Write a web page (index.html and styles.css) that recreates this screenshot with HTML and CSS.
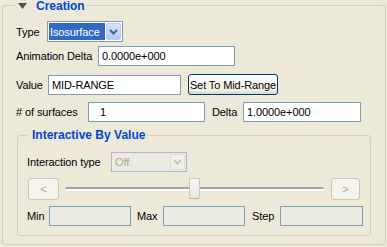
FILE: index.html
```html
<!DOCTYPE html>
<html>
<head>
<title>Creation</title>
<link rel="stylesheet" href="styles.css">
</head>
<body>
<fieldset class="group">
<legend class="groupname"><svg class="twisty" width="9" height="6" viewBox="0 0 9 6"><polygon points="0,0 9,0 4.5,6" fill="#4e4e4e"/></svg><span>Creation</span></legend>

<div class="row row-type">
	<span class="lbl w-type">Type</span>
	<div class="combo w-combo">
		<span class="combo-text selected">Isosurface</span>
		<span class="combo-btn"><svg width="9" height="6" viewBox="0 0 9 6"><polyline points="1,1 4.5,4.5 8,1" fill="none" stroke="#4d6185" stroke-width="2"/></svg></span>
	</div>
</div>

<div class="row row-anim">
	<span class="lbl w-anim">Animation Delta</span>
	<input class="edit w-anim-in" type="text" value="0.0000e+000">
</div>

<div class="row row-value">
	<span class="lbl w-value">Value</span>
	<input class="edit w-value-in" type="text" value="MID-RANGE">
	<button class="btn w-mid">Set To Mid-Range</button>
</div>

<div class="row row-surf">
	<span class="lbl w-surf">#&nbsp;of surfaces</span>
	<input class="edit num w-surf-in" type="text" value="1">
	<span class="lbl w-delta">Delta</span>
	<input class="edit w-delta-in" type="text" value="1.0000e+000">
</div>

<fieldset class="sub">
<legend class="subname">Interactive By Value</legend>

<div class="row row-itype">
	<span class="lbl w-itype">Interaction type</span>
	<div class="combo disabled w-icombo">
		<span class="combo-text">Off</span>
		<span class="combo-btn"><svg width="9" height="6" viewBox="0 0 9 6"><polyline points="1,1 4.5,4.5 8,1" fill="none" stroke="#c9c7ba" stroke-width="2"/></svg></span>
	</div>
</div>

<div class="row row-slider">
	<button class="btn off w-prev" disabled>&lt;</button>
	<div class="slider">
		<div class="track"></div>
		<div class="thumb"></div>
	</div>
	<button class="btn off w-next" disabled>&gt;</button>
</div>

<div class="row row-range">
	<span class="lbl w-min">Min</span>
	<input class="edit w-min-in" type="text" disabled>
	<span class="lbl w-max">Max</span>
	<input class="edit w-max-in" type="text" disabled>
	<span class="lbl w-step">Step</span>
	<input class="edit w-step-in" type="text" disabled>
</div>
</fieldset>
</fieldset>
</body>
</html>
```

FILE: styles.css
```css
body {
	margin: 0;
	background-color: #ece9d8;
	font-family: "Liberation Sans", Arial, sans-serif;
	font-size: 11px;
	letter-spacing: -0.1px;
	color: #000;
}

fieldset.group {
	box-sizing: border-box;
	width: 384px;
	height: 245px;
	margin: 0 0 0 2px;
	padding: 10px 0 0 13px;
	border: 1px solid #d0d0bf;
	border-radius: 3px;
}

legend.groupname {
	display: flex;
	align-items: center;
	height: 11px;
	padding: 0 2px;
	font-size: 12px;
	font-weight: bold;
	letter-spacing: 0;
	color: #0046d5;
}

.twisty {
	margin-right: 9px;
}

fieldset.sub {
	box-sizing: border-box;
	width: 354px;
	height: 107px;
	margin: 7px 0 0 1px;
	padding: 11px 0 0 9px;
	border: 1px solid #d0d0bf;
	border-radius: 3px;
}

legend.subname {
	height: 12px;
	line-height: 12px;
	padding: 0 2px 0 5px;
	font-size: 12px;
	font-weight: bold;
	letter-spacing: 0;
	color: #0046d5;
}

.row {
	display: flex;
	align-items: center;
}

.lbl {
	flex: none;
	white-space: nowrap;
}

/* edits */
.edit {
	box-sizing: border-box;
	height: 20px;
	margin: 0;
	padding: 0 3px;
	border: 1px solid #7f9db9;
	background-color: #fff;
	font-family: inherit;
	font-size: 11px;
	letter-spacing: -0.1px;
	color: #000;
	outline: none;
}

.edit.num {
	padding-left: 11px;
}

.edit:disabled {
	background-color: #ebebe4;
}

/* push buttons */
.btn {
	box-sizing: border-box;
	height: 100%;
	margin: 0;
	padding: 0;
	border: 1px solid #003c74;
	border-radius: 3px;
	background: linear-gradient(#fefefd, #f1f0ea 80%, #d8d4c8);
	font-family: inherit;
	font-size: 11px;
	letter-spacing: -0.1px;
	color: #000;
}

.btn.off {
	border-color: #cac8bb;
	background: #f5f4ea;
	color: #aca899;
}

/* rows of the creation group */
.row-type { height: 21px; }
.row-anim { height: 20px; margin-top: 4px; }
.row-value { height: 21px; margin-top: 8px; }
.row-surf { height: 20px; margin-top: 7px; }

.w-type { width: 31px; }
.w-anim { width: 82px; }
.w-value { width: 32px; }
.w-surf { width: 72px; }
.w-delta { width: 31px; margin-left: 7px; }

.w-combo { width: 76px; }
.w-anim-in { width: 137px; }
.w-value-in { width: 133px; }
.w-surf-in { width: 117px; }
.w-delta-in { width: 118px; }
.w-mid { width: 90px; margin-left: 7px; }

/* rows of the interactive group */
.row-itype { height: 20px; }
.row-slider { height: 22px; margin-top: 6px; }
.row-range { height: 20px; margin-top: 6px; }

.w-itype { width: 84px; }
.w-icombo { width: 76px; }
.w-prev { width: 31px; margin-left: 1px; }
.w-next { width: 29px; margin-left: 7px; }
.w-min { width: 22px; }
.w-max { width: 26px; margin-left: 6px; }
.w-step { width: 28px; margin-left: 7px; }
.w-min-in, .w-max-in { width: 82px; }
.w-step-in { width: 83px; }

/* combo boxes */
.combo {
	box-sizing: border-box;
	display: flex;
	height: 100%;
	padding: 1px;
	border: 1px solid #7f9db9;
	background-color: #fff;
}

.combo-text {
	flex: 1;
	display: flex;
	align-items: center;
	padding-left: 1px;
}

.combo-text.selected {
	background-color: #316ac5;
	color: #fff;
}

.combo-btn {
	box-sizing: border-box;
	display: flex;
	align-items: center;
	justify-content: center;
	width: 15px;
	margin-left: 1px;
	border: 1px solid #b9ccf7;
	border-radius: 2px;
	background: linear-gradient(#d6e2fd, #b4c8f6);
}

.combo.disabled {
	border-color: #a7b9cf;
	background-color: #ebebe4;
}

.combo.disabled .combo-text {
	padding-left: 2px;
	color: #aca899;
}

.combo.disabled .combo-btn {
	border-color: #e1e0d6;
	background: #f1f0ea;
}

/* slider */
.slider {
	position: relative;
	width: 259px;
	height: 100%;
	margin-left: 6px;
	display: flex;
	align-items: center;
}

.track {
	box-sizing: border-box;
	width: 100%;
	height: 4px;
	border-top: 2px solid #a7a69e;
	border-bottom: 2px solid #fff;
	border-radius: 2px;
}

.thumb {
	position: absolute;
	left: 124px;
	top: 0;
	box-sizing: border-box;
	width: 11px;
	height: 21px;
	border: 1px solid #c9c8bf;
	border-bottom-color: #b1b0a6;
	border-radius: 2px;
	background: linear-gradient(#f7f6f2, #e9e8e0);
}
```
